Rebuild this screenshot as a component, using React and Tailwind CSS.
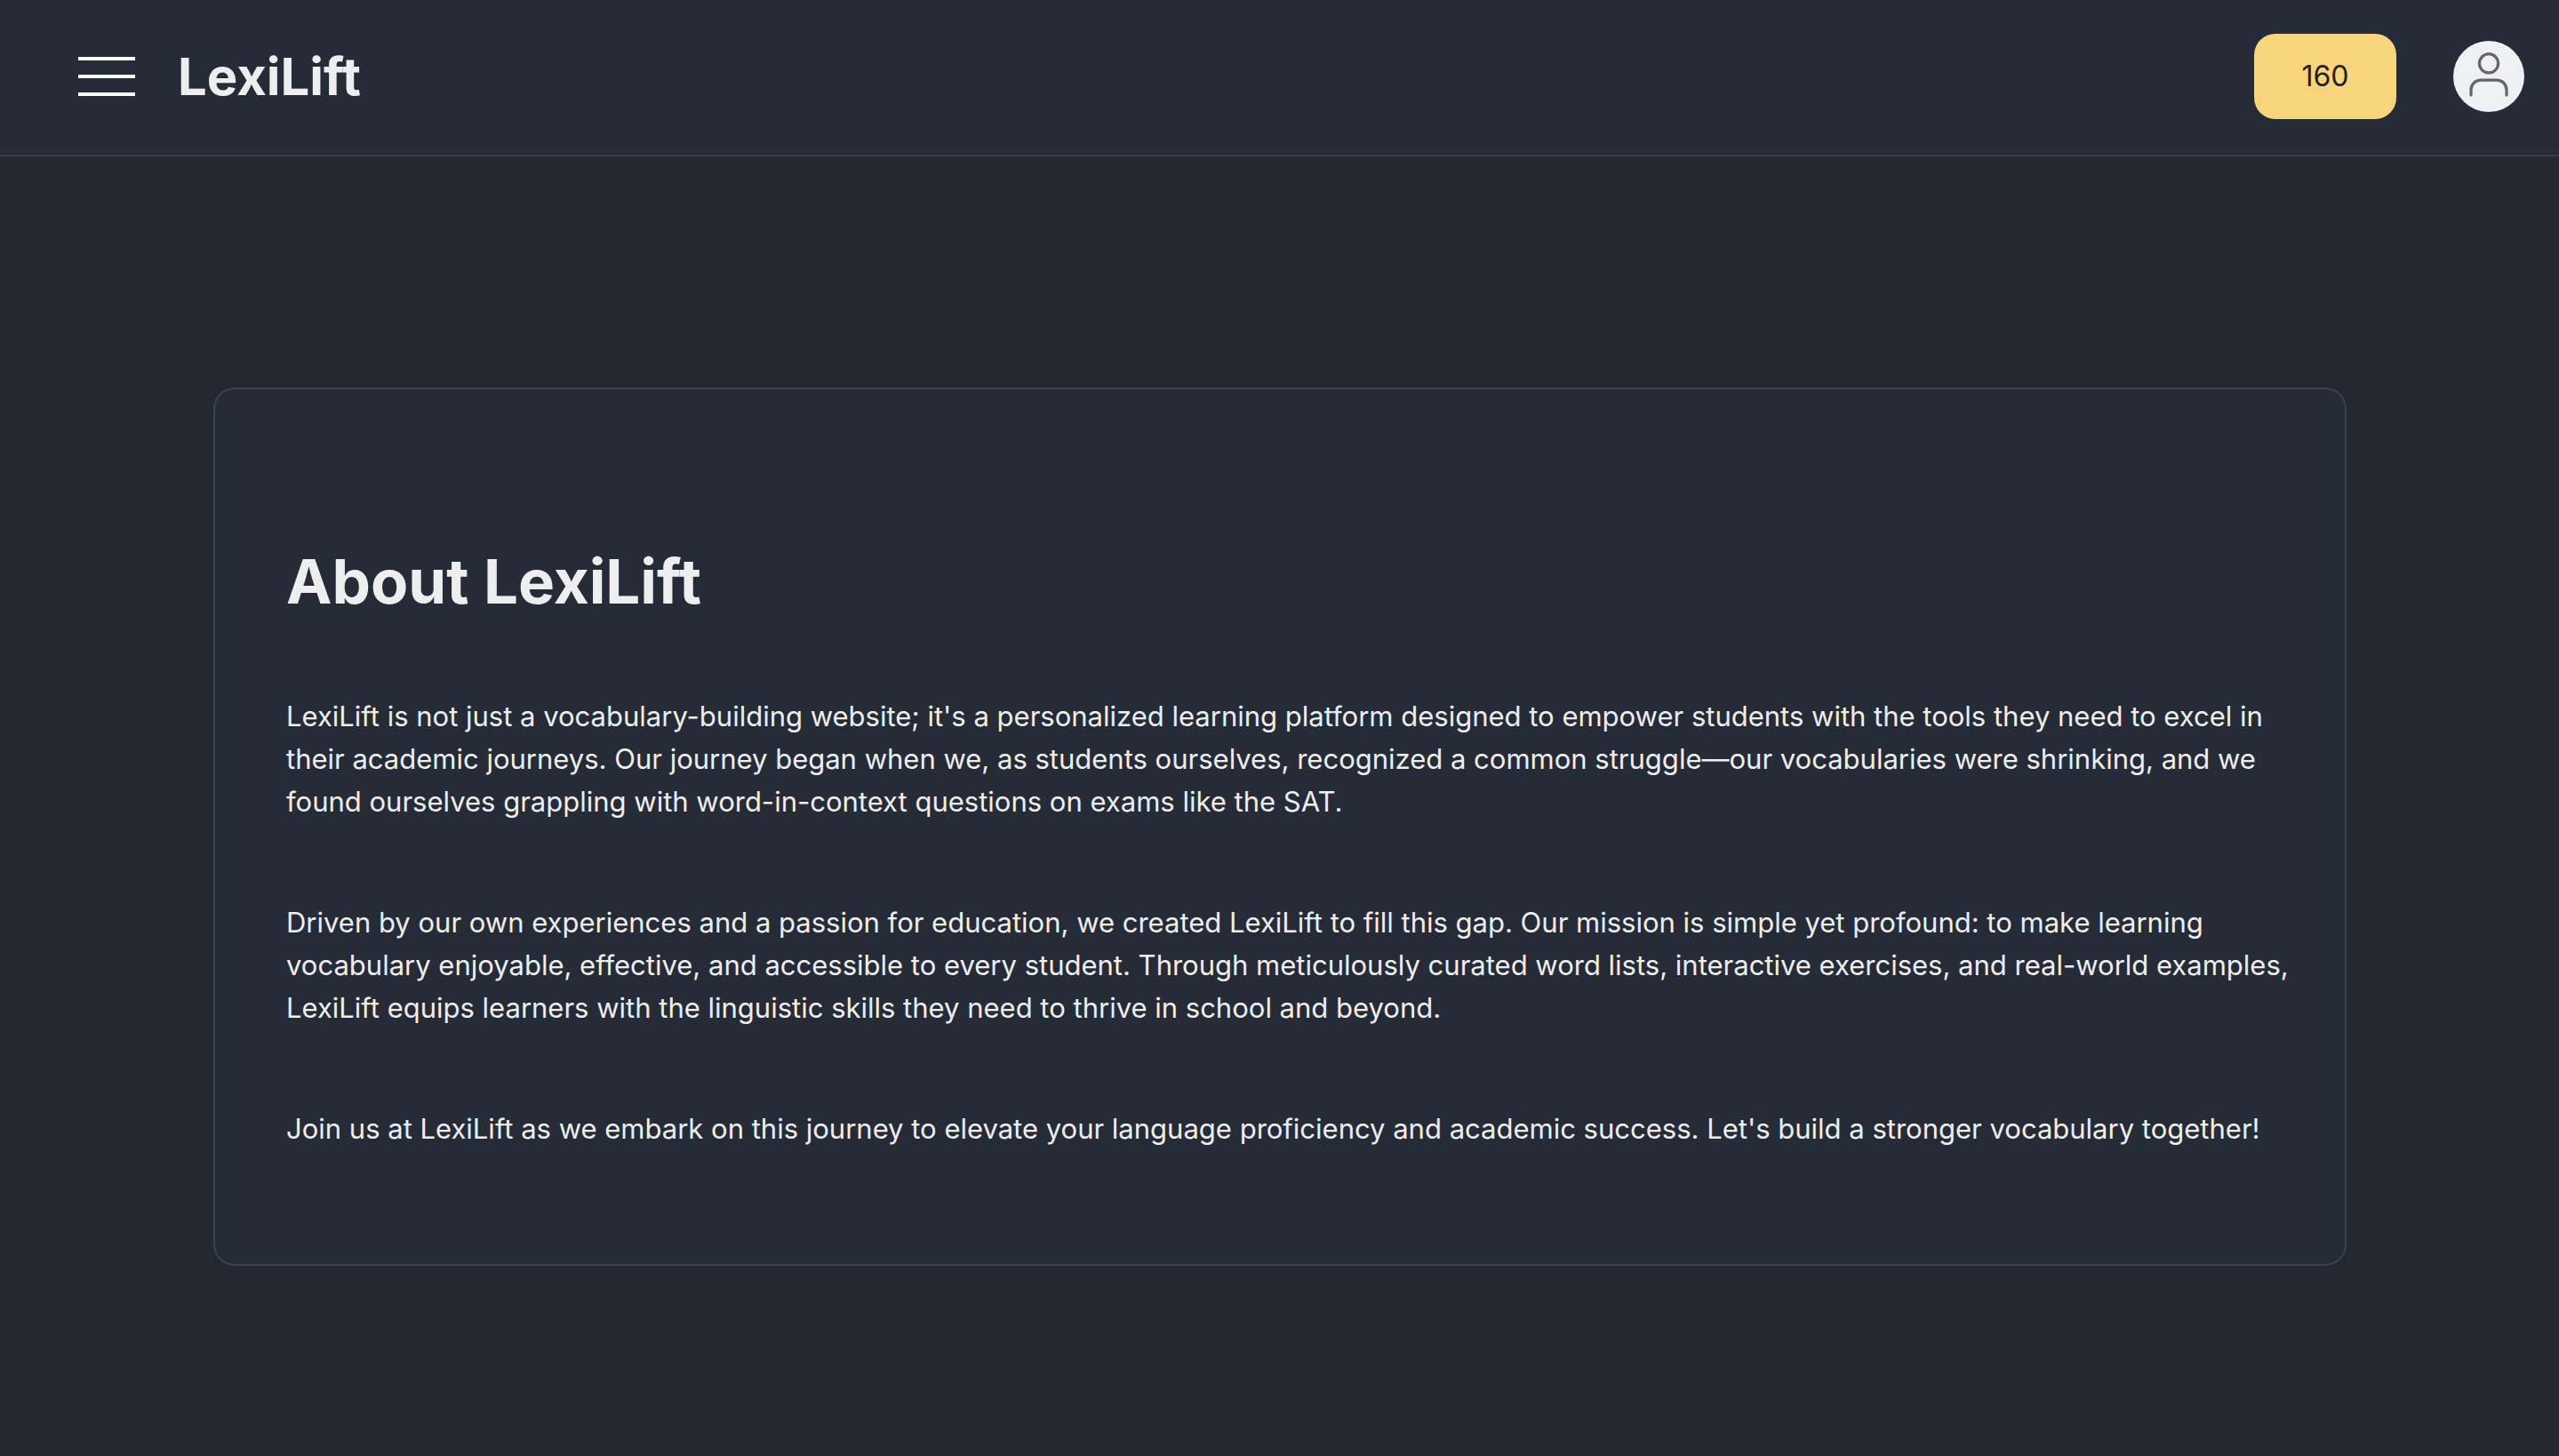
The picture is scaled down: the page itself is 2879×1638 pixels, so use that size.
const PARAGRAPHS = [
  "LexiLift is not just a vocabulary-building website; it's a personalized learning platform designed to empower students with the tools they need to excel in their academic journeys. Our journey began when we, as students ourselves, recognized a common struggle—our vocabularies were shrinking, and we found ourselves grappling with word-in-context questions on exams like the SAT.",
  "Driven by our own experiences and a passion for education, we created LexiLift to fill this gap. Our mission is simple yet profound: to make learning vocabulary enjoyable, effective, and accessible to every student. Through meticulously curated word lists, interactive exercises, and real-world examples, LexiLift equips learners with the linguistic skills they need to thrive in school and beyond.",
  "Join us at LexiLift as we embark on this journey to elevate your language proficiency and academic success. Let's build a stronger vocabulary together!",
];

function MenuButton() {
  return (
    <button type="button" aria-label="Open menu" className="flex w-16 flex-col gap-4">
      <span className="h-1 w-full bg-white" />
      <span className="h-1 w-full bg-white" />
      <span className="h-1 w-full bg-white" />
    </button>
  );
}

function ProfileButton() {
  return (
    <button type="button" aria-label="Profile" className="size-20 overflow-hidden rounded-full bg-[#eff0f4]">
      <svg viewBox="0 0 80 80" className="size-full" fill="none" stroke="#646466" strokeWidth="3.2" strokeLinecap="round">
        <circle cx="40" cy="25.3" r="10.6" />
        <path d="M20 61V55a10.8 10.8 0 0 1 10.8-10.8H49.2a10.8 10.8 0 0 1 10.8 10.8V61" />
      </svg>
    </button>
  );
}

function Header() {
  return (
    <header className="flex h-44 items-center justify-between border-b-2 border-[#3a3f45] bg-[#262c37] pr-[39px] pb-0.5 pl-22">
      <div className="flex items-center gap-12">
        <MenuButton />
        <a href="#" className="text-[58px] leading-none font-bold">LexiLift</a>
      </div>
      <div className="flex items-center gap-16">
        <button type="button" className="h-24 w-40 rounded-3xl bg-[#f8d57a] text-[32px] text-[#1f1f1f]">160</button>
        <ProfileButton />
      </div>
    </header>
  );
}

export default function App() {
  return (
    <div className="flex min-h-screen flex-col bg-[#23272f] font-['Inter',sans-serif] text-[#eeeeee]">
      <Header />
      <main className="pt-65 pr-[239px] pb-50 pl-60">
        <article className="mx-auto flex max-w-[2400px] flex-col gap-22 rounded-3xl border-2 border-[#3a4150] bg-[#262c37] pt-44 pr-14 pb-32 pl-20">
          <h1 className="text-[69px] leading-20 font-bold">About LexiLift</h1>
          {PARAGRAPHS.map((text) => (
            <p key={text} className="text-[31px] leading-12">{text}</p>
          ))}
        </article>
      </main>
    </div>
  );
}
